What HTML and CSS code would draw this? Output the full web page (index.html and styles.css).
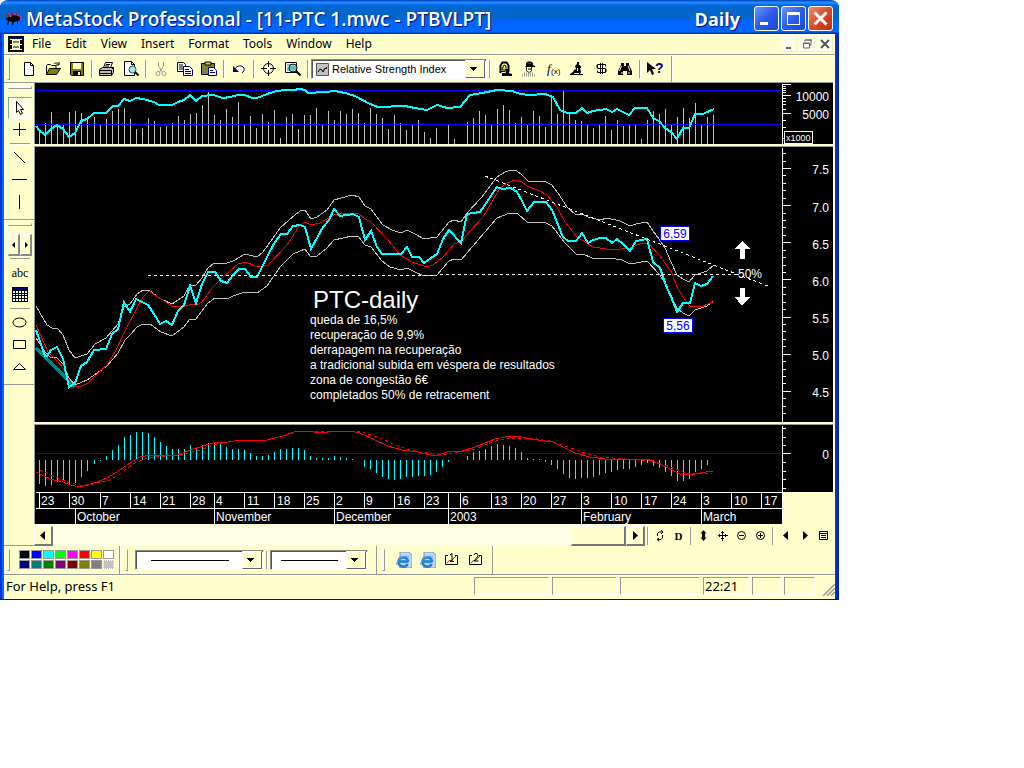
FILE: index.html
```html
<!DOCTYPE html>
<html lang="en">
<head>
    <meta charset="UTF-8">
    <meta name="viewport" content="width=device-width, initial-scale=1.0">
    <title>MetaStock Professional - [11-PTC 1.mwc - PTBVLPT]</title>
    <link rel="stylesheet" href="styles.css">
</head>
<body>
    <div class="window">
        <header class="titlebar">
            <svg class="app-icon" viewBox="0 0 16 16"><text x="0" y="9" class="logo-text">MS</text><path d="M0 8l2-2h3l2-2 4 1 3 1v3l-2 1v3h-1v-3l-3 1-1 3H6v-3L3 10l-1 4H1l1-4z" fill="#000"/></svg>
            <h1>MetaStock Professional - [11-PTC 1.mwc - PTBVLPT]</h1>
            <span class="period">Daily</span>
            <button class="win-btn" aria-label="Minimize"><svg viewBox="0 0 21 21"><path d="M4 14h8v3H4z" fill="#fff"/></svg></button>
            <button class="win-btn" aria-label="Maximize"><svg viewBox="0 0 21 21"><path d="M4 4h13v13H4zM5 7v9h11V7z" fill="#fff" fill-rule="evenodd"/></svg></button>
            <button class="win-btn close" aria-label="Close"><svg viewBox="0 0 21 21"><path d="M4.500 4.500l12 12M16.500 4.500l-12 12" stroke="#fff" stroke-width="3"/></svg></button>
        </header>

        <nav class="menubar">
            <svg class="doc-icon" viewBox="0 0 16 16"><path d="M0 0h16v16H0z" fill="#000"/><path d="M1 1h14v2H1z" fill="#000080"/><path d="M2 3.500h12M2 8.500h12M2 13.500h12M4.500 3v11M11.500 3v11" stroke="#ffc" fill="none"/><path d="M5 4h6v4H5zM5 9h6v4H5z" fill="#ffc"/><path d="M5 6h6M5 11h6" stroke="#000"/></svg>
            <button>File</button>
            <button>Edit</button>
            <button>View</button>
            <button>Insert</button>
            <button>Format</button>
            <button>Tools</button>
            <button>Window</button>
            <button>Help</button>
            <div class="mdi">
                <button aria-label="Minimize chart"><svg viewBox="0 0 12 12"><path d="M3 9h5v2H3z" fill="#666"/></svg></button>
                <button aria-label="Restore chart"><svg viewBox="0 0 12 12"><path d="M4 3.500V2h6v5H8M2.500 5h6v5h-6z" fill="none" stroke="#666"/><path d="M4 2h7M2 5.500h7" stroke="#666"/></svg></button>
                <button aria-label="Close chart"><svg viewBox="0 0 12 12"><path d="M2 2l8 8M10 2l-8 8" stroke="#555" stroke-width="2"/></svg></button>
            </div>
        </nav>

        <div class="toolbar">
            <span class="grip"></span>
            <button aria-label="New"><svg viewBox="0 0 16 16"><path d="M3.500 1.500h6l3 3v10h-9zM9.500 1.500v3h3" fill="#fff" stroke="#000"/></svg></button>
            <button aria-label="Open"><svg viewBox="0 0 16 16"><path d="M1.500 13V4.500l1-1h3l1 1h4.500v3" fill="#ffff80" stroke="#000"/><path d="M1.500 13.500l3-6h11l-4 6z" fill="#808000" stroke="#000"/><path d="M9 3c2-2 4-1 5 1M14 1v3h-3" fill="none" stroke="#000"/></svg></button>
            <button aria-label="Save"><svg viewBox="0 0 16 16"><path d="M1.500 1.500h13v13h-12l-1-1z" fill="#808000" stroke="#000"/><path d="M4 2h8v6H4z" fill="#ffc"/><path d="M4 10h8v4H4z" fill="#000"/><path d="M9 11h2v3H9z" fill="#ffc"/></svg></button>
            <span class="sep"></span>
            <button aria-label="Print"><svg viewBox="0 0 16 16"><path d="M4.500 6.500l2-5h7l-2 5z" fill="#fff" stroke="#000"/><path d="M7 3.500h4M6 5h4" stroke="#000"/><path d="M.5 8.500l3-2h11v5l-2 3h-12z" fill="#bbb" stroke="#000"/><path d="M1 9.500h11.500M1 12.500h11M12.500 9.500V14M13 8l2-2" fill="none" stroke="#000"/><path d="M7 11h3" stroke="#cc0"/></svg></button>
            <button aria-label="Print preview"><svg viewBox="0 0 16 16"><path d="M1.500.5h7l3 3v11h-10zM8.500.5v3h3" fill="#fff" stroke="#000"/><circle cx="9.500" cy="8.500" r="3.500" fill="#9ee" stroke="#444"/><path d="M12 11l3.500 3.500" stroke="#000" stroke-width="2"/></svg></button>
            <span class="sep"></span>
            <button aria-label="Cut"><svg viewBox="0 0 16 16"><path d="M5.500 1v4l4 6M10.500 1v4l-4 6" fill="none" stroke="#999"/><circle cx="5" cy="12.500" r="2" fill="none" stroke="#999"/><circle cx="11" cy="12.500" r="2" fill="none" stroke="#999"/></svg></button>
            <button aria-label="Copy"><svg viewBox="0 0 16 16"><path d="M.5 1.500h6l2 2v7h-8z" fill="#fff" stroke="#000"/><path d="M2 4h4M2 6h4M2 8h4" stroke="#000"/><path d="M6.500 5.500h6l3 3v6h-9z" fill="#fff" stroke="#000080"/><path d="M8 8.500h4M8 10.500h6M8 12.500h6" stroke="#000080"/></svg></button>
            <button aria-label="Paste"><svg viewBox="0 0 16 16"><path d="M.5 2.500h13v11H.5z" fill="#808040" stroke="#000"/><path d="M4 1h6v3H4z" fill="#cc8" stroke="#000"/><path d="M7.500 6.500h5l3 3v5h-8z" fill="#fff" stroke="#000080"/><path d="M9 9.500h3M9 11.500h5" stroke="#000080"/></svg></button>
            <span class="sep"></span>
            <button aria-label="Undo"><svg viewBox="0 0 16 16"><path d="M4 8c2-4 7-4 9-1 1 2-1 4-2 5" fill="none" stroke="#000080"/><path d="M2 5v6h6z" fill="#000080"/></svg></button>
            <span class="sep"></span>
            <button aria-label="Crosshair"><svg viewBox="0 0 16 16"><circle cx="7.500" cy="7.500" r="5" fill="none" stroke="#000"/><path d="M7.500 0v6M7.500 9v6M0 7.500h6M9 7.500h6" stroke="#000"/></svg></button>
            <button aria-label="Explore"><svg viewBox="0 0 16 16"><path d="M.5 1.500h11v10H.5z" fill="#fff" stroke="#000"/><path d="M2 4h5M2 7h2M2 9h3" stroke="#008080"/><circle cx="8" cy="7" r="4" fill="#bff" stroke="#000"/><path d="M6 5v4M8 4v6M10 5v4" stroke="#008080"/><path d="M11 10l4.500 4.500" stroke="#000" stroke-width="2"/></svg></button>
            <span class="sep"></span>
            <div class="combo indicator">
                <svg viewBox="0 0 13 13"><path d="M.5.5h12v12H.5z" fill="#c0c0c0" stroke="#555"/><path d="M2 9l2-3 2 1 1 2 2-4 1 1 1-2" fill="none" stroke="#000"/></svg>
                <select aria-label="Indicator"><option>Relative Strength Index</option></select>
            </div>
            <span class="sep"></span>
            <button aria-label="Explorer"><svg viewBox="0 0 16 16"><path d="M3.500 12V4.500l2-3h4l2 3V11" fill="#ffc" stroke="#000" stroke-width="2"/><path d="M8 8h4v4l3 1v2H5v-2h4z" fill="#000"/><path d="M5 8l2-4 2 1v4H5z" fill="#ee3" stroke="#000"/><path d="M4 10.500h4M5 12.500h5" stroke="#000"/></svg></button>
            <button aria-label="Expert advisor"><svg viewBox="0 0 16 16"><path d="M5 5V2l2-1.500h3L12 2v2l2 1v1H4z" fill="#000"/><path d="M6 2h4v1H6z" fill="#22c"/><path d="M5.500 6v4l2.500 1.500 2.500-1.500V6" fill="#ffc" stroke="#333"/><path d="M7 8h3" stroke="#000"/><path d="M1 14.500h14M3 12.500h10" stroke="#999" stroke-width="2" stroke-dasharray="1 1"/></svg></button>
            <button aria-label="Indicator builder"><svg viewBox="0 0 16 16"><text x="2" y="12" class="fx">f</text><text x="6" y="13" class="fx-arg">(x)</text></svg></button>
            <button aria-label="System tester"><svg viewBox="0 0 16 16"><path d="M8 1h2v3l2 1v2h-1l1 4-1 2h3v1H1v-1l3-2 1-2 2-1-1-3 2-2z" fill="#000"/><path d="M5 12.500h5M8.500 7v3" stroke="#ffc"/></svg></button>
            <button aria-label="Options"><svg viewBox="0 0 16 16"><path d="M12.500 5.500v-2h-8v4h8v4h-8v-2M7.500 2v11M9.500 2v11" fill="none" stroke="#000"/><path d="M4 4v3M13 8v3" stroke="#000"/></svg></button>
            <button aria-label="Find"><svg viewBox="0 0 16 16"><path d="M4 2h3v3h2V2h3v2l3 6v4h-5v-4H6v4H1v-4l3-6z" fill="#000"/><path d="M4.500 5l-2 5M5 11v2M11 5l2 5M12 11v2" stroke="#ffc"/></svg></button>
            <span class="sep"></span>
            <button aria-label="Context help"><svg class="wide" viewBox="0 0 18 16"><path d="M1 1v11l3-3 2 5 2-1-2-5h4z" fill="#000"/><text x="9" y="12" class="help-mark">?</text></svg></button>
            <span class="edge"></span>
        </div>

        <div class="workspace">
            <aside class="tools">
                <div class="tool-group">
                    <span class="hgrip"></span>
                    <button class="pressed" aria-label="Pointer"><svg viewBox="0 0 16 16"><path d="M4.500 1.500v11l2-2 2 4 2-1-2-4h3z" fill="#fff" stroke="#000"/></svg></button>
                    <button aria-label="Crosshair pointer"><svg viewBox="0 0 16 16"><path d="M7.500 1v13M1 7.500h13" stroke="#000"/></svg></button>
                    <span class="hsep"></span>
                    <button aria-label="Trendline"><svg viewBox="0 0 16 16"><path d="M2 2l11 11" stroke="#000"/></svg></button>
                    <button aria-label="Horizontal line"><svg viewBox="0 0 16 16"><path d="M0 7.500h15" stroke="#000"/></svg></button>
                    <button aria-label="Vertical line"><svg viewBox="0 0 16 16"><path d="M7.500 1v14" stroke="#000"/></svg></button>
                </div>
                <div class="tool-group">
                    <span class="hgrip"></span>
                    <div class="pair">
                        <button aria-label="Previous tool"><svg viewBox="0 0 8 8"><path d="M5 1v6L2 4z" fill="#000"/></svg></button>
                        <button aria-label="Next tool"><svg viewBox="0 0 8 8"><path d="M3 1v6l3-3z" fill="#000"/></svg></button>
                    </div>
                    <span class="hsep"></span>
                    <button class="abc">abc</button>
                    <button aria-label="Data grid"><svg viewBox="0 0 16 16"><path d="M0 0h16v15H0z" fill="#000"/><path d="M1 1h14v2H1z" fill="#000080"/><path d="M1 4h2v2H1zM4 4h2v2H4zM7 4h2v2H7zM10 4h2v2h-2zM13 4h2v2h-2zM1 7h2v1H1zM4 7h2v1H4zM7 7h2v1H7zM10 7h2v1h-2zM13 7h2v1h-2zM1 9h2v2H1zM4 9h2v2H4zM7 9h2v2H7zM10 9h2v2h-2zM13 9h2v2h-2zM1 12h2v2H1zM4 12h2v2H4zM7 12h2v2H7zM10 12h2v2h-2zM13 12h2v2h-2z" fill="#fff"/></svg></button>
                    <span class="hsep"></span>
                    <button aria-label="Ellipse"><svg viewBox="0 0 16 16"><ellipse cx="7.500" cy="7.500" rx="6.500" ry="4.500" fill="none" stroke="#000"/></svg></button>
                    <button aria-label="Rectangle"><svg viewBox="0 0 16 16"><path d="M1.500 3.500h12v8h-12z" fill="none" stroke="#000"/></svg></button>
                    <button aria-label="Triangle"><svg viewBox="0 0 16 16"><path d="M7.500 4.500l-6 6h12z" fill="none" stroke="#000"/></svg></button>
                </div>
            </aside>

            <main class="charts">
                <!-- RSI over volume -->
                <svg class="pane" viewBox="35 83 798 61">
                    <path class="bars" id="volumeBars"/>
                    <path class="level" d="M36 90.500H782M36 124.500H782"/>
                    <polyline class="price" points="36,126 39,130 45,135 51,129 57,125 63,129 69,137 75,133 81,121 87,119 94,113 106,113 113,106 118,106 124,99 130,101 136,98 143,99 154,102 159,105 172,105 178,102 184,100 190,95 196,101 202,96 213,95 223,98 230,97 238,95 245,95 252,98 257,98 267,94 277,91 285,90 293,90 300,89 305,90 308,93 325,92 335,91 345,93 355,96 370,104 378,107 405,106 415,108 427,110 437,105 447,108 460,107 470,95 482,93 497,90 512,91 520,94 530,95 545,94 553,97 560,110 567,113 576,113 582,108 587,113 593,111 606,109 612,112 617,109 629,115 635,108 647,108 653,118 659,121 665,128 671,132 677,139 683,128 689,128 695,114 703,114 714,109"/>
                    <path class="axis" d="M782.500 84V144M782 84.500h9M782 86.500h4M782 88.500h4M782 90.500h4M782 92.500h4M782 95.500h9M782 98.500h4M782 101.500h4M782 104.500h4M782 109.500h4M782 113.500h9M782 120.500h4M782 127.500h4M782 138.500h4"/>
                    <text class="scale" x="829" y="101">10000</text>
                    <text class="scale" x="829" y="119">5000</text>
                    <rect class="unit-box" x="784.500" y="131.500" width="28" height="12"/>
                    <text class="unit" x="786" y="141">x1000</text>
                </svg>

                <!-- price with moving average and bands -->
                <svg class="pane" viewBox="35 147 798 275">
                    <path class="trend" d="M36 348L75 387"/>
                    <polyline class="band" points="36,306 47,325 52,328 58,329 63,335 69,350 75,358 87,354 95,344 106,338 118,324 124,307 130,304 137,294 143,290 149,290 161,299 172,304 184,296 190,285 196,285 202,278 208,268 214,263 227,263 233,261 245,254 257,257 263,252 273,238 280,228 289,220 300,211 305,210 311,219 317,217 327,210 334,200 352,195 359,197 365,206 371,209 383,225 392,230 401,233 407,230 415,234 424,239 437,237 449,222 454,220 461,222 467,213 482,197 497,177 505,172 511,170 517,171 522,175 528,181 546,182 552,185 558,193 567,207 576,215 582,214 588,217 600,220 607,218 620,221 630,226 636,224 647,222 653,231 659,239 665,248 671,262 677,275 683,279 689,282 695,275 707,271 714,265"/>
                    <polyline class="band" points="36,338 45,352 50,357 57,358 63,364 69,378 75,385 87,380 100,371 107,366 118,353 125,340 130,335 137,327 143,324 150,324 161,332 172,336 184,327 190,319 196,319 208,303 215,298 227,299 233,296 245,292 257,293 267,286 280,267 293,254 300,251 305,249 311,257 317,256 327,248 334,240 352,236 359,237 365,245 371,247 382,261 390,267 401,270 407,268 415,272 424,276 437,275 449,261 454,259 461,260 467,253 478,240 497,218 510,213 518,214 527,222 546,223 552,226 565,243 576,254 583,254 592,258 610,258 622,260 630,264 636,263 647,261 660,275 667,287 677,308 683,313 689,316 695,310 707,306 713,301"/>
                    <polyline class="average" points="36,325 48,352 57,361 63,368 69,380 75,386 82,386 88,383 100,371 107,365 115,352 125,331 137,308 143,297 149,291 158,297 172,306 182,307 192,304 197,305 202,302 213,287 222,278 238,264 246,262 257,267 268,265 287,245 300,225 305,222 311,225 320,223 334,215 343,213 359,214 365,219 371,222 388,240 400,255 412,262 427,267 433,265 443,257 454,244 462,241 470,231 483,217 493,200 500,188 507,183 515,180 522,182 527,186 538,190 547,195 557,207 565,222 577,237 587,243 593,247 600,248 612,250 630,248 642,243 648,243 660,256 672,273 677,287 683,297 690,306 703,306 713,302"/>
                    <polyline class="price" points="36,330 45,356 47,356 51,350 57,347 63,359 69,387 75,383 81,366 87,362 94,350 106,349 112,334 118,329 124,302 130,312 136,299 148,305 154,314 160,324 166,321 172,325 178,311 184,305 190,286 196,303 202,284 208,272 215,272 221,281 227,283 233,275 239,269 245,269 251,277 257,277 263,265 269,253 275,242 281,234 287,234 293,226 300,225 305,227 311,249 323,227 329,220 334,209 340,216 353,214 359,217 365,240 371,231 377,247 382,254 401,254 407,247 412,257 419,257 424,263 431,258 437,254 443,239 449,230 461,243 467,214 473,213 480,212 497,187 502,189 511,188 517,192 522,201 527,211 534,202 546,202 552,210 563,237 568,241 576,241 582,233 588,243 593,240 600,238 606,238 612,243 617,239 623,244 630,251 636,241 647,239 653,262 660,268 665,283 671,297 677,312 683,303 690,303 695,283 701,286 707,284 713,276"/>
                    <path class="guide" d="M148 275.500H437M440 274.500H738M485 176L770 287"/>
                    <path class="axis" id="priceAxis"/>
                    <text class="scale" x="829" y="174">7.5</text>
                    <text class="scale" x="829" y="212">7.0</text>
                    <text class="scale" x="829" y="249">6.5</text>
                    <text class="scale" x="829" y="286">6.0</text>
                    <text class="scale" x="829" y="323">5.5</text>
                    <text class="scale" x="829" y="360">5.0</text>
                    <text class="scale" x="829" y="397">4.5</text>
                    <rect class="callout-box" x="660.500" y="226.500" width="29" height="14"/>
                    <text class="callout" x="675" y="238">6,59</text>
                    <rect class="callout-box" x="663.500" y="318.500" width="29" height="14"/>
                    <text class="callout" x="678" y="330">5,56</text>
                    <path class="arrow" d="M742 241l8 8h-5v10h-5v-10h-5zM740 288h5v9h5l-8 9-7-9h5z"/>
                    <text class="note" x="738" y="278">50%</text>
                    <text class="heading" x="313" y="308">PTC-daily</text>
                    <text class="note" x="310" y="324">queda de 16,5%</text>
                    <text class="note" x="310" y="339">recuperação de 9,9%</text>
                    <text class="note" x="310" y="354">derrapagem na recuperação</text>
                    <text class="note" x="310" y="369">a tradicional subida em véspera de resultados</text>
                    <text class="note" x="310" y="384">zona de congestão 6€</text>
                    <text class="note" x="310" y="399">completados 50% de retracement</text>
                </svg>

                <!-- MACD -->
                <svg class="pane" viewBox="35 425 798 67">
                    <path class="level" d="M36 453.500H782"/>
                    <path class="histogram" id="macdBars"/>
                    <polyline class="average" points="36,472 40,474 50,479 63,482 70,485 75,486 83,486 97,482 107,478 120,470 130,463 140,457 150,455 178,455 190,450 203,446 213,443 228,442 240,440 267,440 283,436 297,431 310,431 318,433 328,432 335,431 350,431 360,433 375,440 388,446 402,450 418,452 435,456 450,451 462,451 475,447 495,439 510,436 518,436 530,439 553,442 575,453 590,457 605,459 650,460 660,464 670,469 680,474 690,475 700,473 713,471"/>
                    <polyline class="average dashed" points="40,470 60,479 70,483 85,486 97,483 110,480 120,474 133,464 147,458 165,456 180,455 200,450 217,444 240,440 265,440 280,437 300,431 345,431 362,432 380,438 395,445 410,450 420,452 440,455 460,452 475,449 492,442 508,438 530,438 550,441 565,446 585,453 600,457 650,461 665,465 680,471 690,474 712,473"/>
                    <path class="axis" d="M782.500 426V492M782 428.500h4M782 437.500h4M782 445.500h4M782 453.500h9M782 462.500h4M782 471.500h4M782 479.500h4M782 488.500h4"/>
                    <text class="scale" x="829" y="459">0</text>
                </svg>

                <svg class="dates" viewBox="35 492 798 32">
                    <rect x="35" y="492" width="748" height="32"/>
                    <path class="axis" d="M36 492.500H783M36 508.500H783M782.500 492V524M39.500 492v16M69.500 492v16M100.500 492v16M130.500 492v16M160.500 492v16M190.500 492v16M214.500 492v32M244.500 492v16M274.500 492v16M304.500 492v16M334.500 492v32M364.500 492v16M394.500 492v16M424.500 492v16M460.500 492v16M491.500 492v16M521.500 492v16M551.500 492v16M581.500 492v32M611.500 492v16M641.500 492v16M671.500 492v16M701.500 492v32M731.500 492v16M761.500 492v16M75.500 508v16M448.500 492v32"/>
                    <g class="note">
                        <text x="41" y="505">23</text>
                        <text x="71" y="505">30</text>
                        <text x="102" y="505">7</text>
                        <text x="133" y="505">14</text>
                        <text x="162" y="505">21</text>
                        <text x="192" y="505">28</text>
                        <text x="216" y="505">4</text>
                        <text x="247" y="505">11</text>
                        <text x="277" y="505">18</text>
                        <text x="306" y="505">25</text>
                        <text x="336" y="505">2</text>
                        <text x="366" y="505">9</text>
                        <text x="397" y="505">16</text>
                        <text x="426" y="505">23</text>
                        <text x="462" y="505">6</text>
                        <text x="494" y="505">13</text>
                        <text x="523" y="505">20</text>
                        <text x="553" y="505">27</text>
                        <text x="583" y="505">3</text>
                        <text x="614" y="505">10</text>
                        <text x="644" y="505">17</text>
                        <text x="673" y="505">24</text>
                        <text x="703" y="505">3</text>
                        <text x="734" y="505">10</text>
                        <text x="764" y="505">17</text>
                        <text x="77" y="521">October</text>
                        <text x="216" y="521">November</text>
                        <text x="336" y="521">December</text>
                        <text x="450" y="521">2003</text>
                        <text x="583" y="521">February</text>
                        <text x="703" y="521">March</text>
                    </g>
                </svg>

                <div class="scroll-row">
                    <button class="raised" aria-label="Scroll left"><svg viewBox="0 0 12 12"><path d="M8 1v9L3 5.500z" fill="#000"/></svg></button>
                    <div class="track"><span class="thumb raised"></span></div>
                    <button class="raised" aria-label="Scroll right"><svg viewBox="0 0 12 12"><path d="M4 1v9l5-4.500z" fill="#000"/></svg></button>
                    <span class="sep tight"></span>
                    <button aria-label="Refresh"><svg viewBox="0 0 12 12"><path d="M3.500 6V3.500L5 2h3M8.500 5v3L7 9.500H4M7 0l2 2-2 2M5 8L3 9.500 5 11" fill="none" stroke="#000"/></svg></button>
                    <button class="letter">D</button>
                    <span class="sep"></span>
                    <button aria-label="Fit vertically"><svg viewBox="0 0 12 12"><path d="M5.500 0l3 3.500H7v4h1.500l-3 3.500-3-3.500H4v-4H2.500z" fill="#000"/></svg></button>
                    <button aria-label="Fit all"><svg viewBox="0 0 12 12"><path d="M5.500 1v10M1 5.500h10M4 2.500h3M4 8.500h3M2.500 4v3M8.500 4v3" stroke="#000"/></svg></button>
                    <button aria-label="Zoom out"><svg viewBox="0 0 12 12"><circle cx="5.500" cy="5.500" r="4" fill="none" stroke="#000"/><path d="M3 5.500h5" stroke="#000"/></svg></button>
                    <button aria-label="Zoom in"><svg viewBox="0 0 12 12"><circle cx="5.500" cy="5.500" r="4" fill="none" stroke="#000"/><path d="M3 5.500h5M5.500 3v5" stroke="#000"/></svg></button>
                    <span class="sep"></span>
                    <button aria-label="Previous security"><svg viewBox="0 0 12 12"><path d="M8 1v9L3 5.500z" fill="#000"/></svg></button>
                    <button aria-label="Next security"><svg viewBox="0 0 12 12"><path d="M4 1v9l5-4.500z" fill="#000"/></svg></button>
                    <button aria-label="Chart list"><svg viewBox="0 0 12 12"><path d="M1.500 1.500h8v8h-8zM1 3.500h9M3 5.500h5M3 7.500h5" fill="none" stroke="#000"/></svg></button>
                </div>
            </main>
        </div>

        <div class="toolbar lower">
            <span class="grip"></span>
            <div class="palette">
                <button class="black" aria-label="Black"></button>
                <button class="blue" aria-label="Blue"></button>
                <button class="cyan" aria-label="Cyan"></button>
                <button class="lime" aria-label="Lime"></button>
                <button class="magenta" aria-label="Magenta"></button>
                <button class="red" aria-label="Red"></button>
                <button class="yellow" aria-label="Yellow"></button>
                <button class="white" aria-label="White"></button>
                <button class="navy" aria-label="Navy"></button>
                <button class="teal" aria-label="Teal"></button>
                <button class="green" aria-label="Green"></button>
                <button class="purple" aria-label="Purple"></button>
                <button class="maroon" aria-label="Maroon"></button>
                <button class="olive" aria-label="Olive"></button>
                <button class="gray" aria-label="Gray"></button>
                <button class="silver" aria-label="Silver"></button>
            </div>
            <span class="edge"></span>
            <span class="grip"></span>
            <div class="combo line-style"><select aria-label="Line style"><option aria-label="Solid"></option></select></div>
            <span class="sep"></span>
            <div class="combo line-weight"><select aria-label="Line weight"><option aria-label="Thin"></option></select></div>
            <span class="edge"></span>
            <span class="grip"></span>
            <button aria-label="Web page 1"><svg viewBox="0 0 16 16"><path d="M4 0h9l3 3v13H4z" fill="#c3d3f7" stroke="#7b94cf"/><path d="M12.500 9.500H3.500M11.500 12c-1 2-3 3-5 2.500C3.500 14 2 12 2.500 9.500 3 7 5 5.500 7.500 5.500c3 0 4.500 2 4.500 4" fill="none" stroke="#1c7fd6" stroke-width="2.500"/><path d="M0 13C2 7 8 3 13 5" fill="none" stroke="#4aa8f0"/></svg></button>
            <button aria-label="Web page 2"><svg viewBox="0 0 16 16"><path d="M4 0h9l3 3v13H4z" fill="#c3d3f7" stroke="#7b94cf"/><path d="M12.500 9.500H3.500M11.500 12c-1 2-3 3-5 2.500C3.500 14 2 12 2.500 9.500 3 7 5 5.500 7.500 5.500c3 0 4.500 2 4.500 4" fill="none" stroke="#1c7fd6" stroke-width="2.500"/><path d="M0 13C2 7 8 3 13 5" fill="none" stroke="#4aa8f0"/></svg></button>
            <button aria-label="Layout 1"><svg viewBox="0 0 16 16"><path d="M4 3.500H1.500v9h12v-9H11" fill="none" stroke="#000"/><path d="M3 11l3-3 1 1 5-5" fill="none" stroke="#e00"/><path d="M6 3l2-1.500V9M6 9.500h4" fill="none" stroke="#000"/></svg></button>
            <button aria-label="Layout 2"><svg viewBox="0 0 16 16"><path d="M4 3.500H1.500v9h12v-9H11" fill="none" stroke="#000"/><path d="M3 11l3-3 1 1 5-5" fill="none" stroke="#e00"/><path d="M6 3l1-1.500h2L10 3v1L6 9h4.500" fill="none" stroke="#000"/></svg></button>
            <span class="edge"></span>
        </div>

        <footer class="status">
            <span class="hint">For Help, press F1</span>
            <span class="cell w75"></span>
            <span class="cell w65"></span>
            <span class="cell w80"></span>
            <span class="cell w46">22:21</span>
            <span class="cell w29"></span>
            <span class="cell w31"></span>
            <svg class="resize" viewBox="0 0 13 13"><path d="M1 13L13 1M5 13l8-8M9 13l4-4" stroke="#999" stroke-width="1.500"/></svg>
        </footer>
    </div>

    <script>
        // One value per trading day, in chart units
        const volume = [
            14, 21, 32, 19, 19, 32, 33, 31, 24, 27, 19, 25, 33, 35, 36, 25, 15, 16, 26, 23,
            17, 18, 21, 28, 24, 30, 31, 39, 52, 29, 24, 35, 27, 42, 19, 28, 16, 30, 22, 34,
            6, 27, 30, 15, 29, 29, 36, 20, 33, 24, 33, 30, 35, 31, 21, 36, 30, 26, 15, 29,
            21, 14, 20, 24, 12, 6, 16, 0, 19, 5, 0, 22, 26, 33, 29, 20, 35, 39, 34, 21,
            27, 20, 33, 28, 17, 48, 30, 53, 30, 24, 23, 20, 16, 19, 28, 14, 24, 18, 19, 19,
            5, 24, 33, 30, 35, 19, 27, 36, 26, 41, 19, 27, 29
        ];
        const macd = [
            -24, -26, -25, -22, -21, -24, -23, -17, -11, -4, -1, 4, 10, 15, 23, 25, 28, 28, 27, 23,
            18, 14, 11, 11, 11, 15, 13, 15, 17, 18, 16, 13, 11, 11, 10, 7, 4, 4, 5, 8,
            11, 11, 12, 12, 10, 4, 2, 2, 2, 4, 3, 2, 1, 0, -7, -9, -13, -17, -19, -20,
            -19, -17, -17, -16, -16, -15, -12, -7, -2, 0, 0, 4, 8, 9, 11, 14, 16, 15, 14, 12,
            8, 2, 1, 1, -2, -5, -9, -14, -18, -19, -18, -18, -17, -15, -13, -12, -10, -9, -9, -7,
            -5, -3, -6, -8, -12, -16, -21, -21, -19, -12, -9, -5
        ];

        function dayX(i) {
            if (i < 9) return 39.5 + 6 * i;
            return (i < 71 ? 40.5 : 41.5) + 6 * i;
        }

        function barPath(values, base) {
            return values.map((v, i) => `M${dayX(i)} ${base}v${-v}`).join('');
        }

        document.getElementById('volumeBars').setAttribute('d', barPath(volume, 144));
        document.getElementById('macdBars').setAttribute('d', barPath(macd, 460));

        // Price scale: a long tick every 0.5, short ones every 0.1
        let ticks = 'M782.5 148V422';
        for (let i = -2; i < 34; i++) {
            const y = Math.round(168 + i * 7.43) + 0.5;
            ticks += `M782 ${y}h${i % 5 === 0 ? 9 : 4}`;
        }
        document.getElementById('priceAxis').setAttribute('d', ticks);
    </script>
</body>
</html>
```
FILE: styles.css
```css
* {
    margin: 0;
    padding: 0;
    box-sizing: border-box;
}

body {
    font-family: "Noto Sans", Tahoma, sans-serif;
    font-size: 12px;
    color: #000;
    background: #fff;
}

button {
    display: flex;
    align-items: center;
    justify-content: center;
    border: none;
    background: none;
    font: inherit;
    color: inherit;
}

svg {
    display: block;
    flex: none;
}

.window {
    width: 100%;
    max-width: 839px;
    padding: 0 4px 3px;
    border-radius: 8px 8px 0 0;
    background: linear-gradient(90deg, #0831d9 2px, #0066ff 2px, #0066ff 4px, #ffffcc 4px, #ffffcc calc(100% - 4px), #0040e0 calc(100% - 4px), #001ea0);
    border-bottom: 1px solid #001090;
}

/* title bar */
.titlebar {
    display: flex;
    align-items: center;
    gap: 2px;
    height: 34px;
    margin: 0 -4px;
    padding: 3px 6px 0 6px;
    border-radius: 8px 8px 0 0;
    background: linear-gradient(#0050d0 1px, #3090ff 2px, #0070f0 5px, #0066cc 6px, #0066cc 19px, #0066ff 20px, #0066ff 32px, #0030c0 33px);
    color: #fff;
}

.app-icon {
    width: 16px;
    height: 16px;
}

.logo-text {
    font: bold 10px "Liberation Serif", serif;
    fill: #f00;
}

.titlebar h1,
.period {
    font-family: "Open Sans", "Trebuchet MS", sans-serif;
    font-size: 19px;
    font-weight: 600;
    text-shadow: 1px 1px 1px #00107a;
    white-space: nowrap;
}

.titlebar h1 {
    flex: 1;
    padding-left: 2px;
}

.period {
    margin-right: 12px;
    font-size: 18px;
    font-weight: 700;
}

.win-btn {
    width: 25px;
    height: 25px;
    border: 1px solid #fff;
    border-radius: 3px;
    background: linear-gradient(135deg, #6a96ff, #2b5bea 50%, #1c48d0);
}

.win-btn svg {
    width: 21px;
    height: 21px;
}

.close {
    background: linear-gradient(135deg, #f09070, #d8492a 50%, #b83010);
}

/* menu */
.menubar {
    display: flex;
    align-items: center;
    height: 21px;
    padding: 0 2px 1px 4px;
    border-bottom: 1px solid #999;
}

.menubar button {
    padding: 0 7px;
}

.doc-icon {
    width: 16px;
    height: 16px;
    margin-right: 1px;
}

.mdi {
    display: flex;
    gap: 2px;
    margin-left: auto;
}

.menubar .mdi button {
    width: 16px;
    height: 17px;
    padding: 0;
    background: #fffff0;
    border: 1px solid #fff;
    border-right-color: #eec;
    border-bottom-color: #eec;
}

.mdi svg {
    width: 12px;
    height: 12px;
}

/* toolbars */
.toolbar {
    display: flex;
    align-items: center;
    height: 27px;
    padding-left: 3px;
    border-top: 1px solid #fff;
}

.toolbar button {
    width: 24px;
    height: 22px;
}

.toolbar button svg {
    width: 16px;
    height: 16px;
}

.toolbar button .wide {
    width: 18px;
}

.grip {
    width: 3px;
    height: 22px;
    margin-right: 7px;
    border: 1px solid #fff;
    border-right-color: #999;
    border-bottom-color: #999;
}

.sep {
    flex: none;
    width: 2px;
    height: 18px;
    margin: 0 2px;
    border-left: 1px solid #999;
    border-right: 1px solid #fff;
}

.edge {
    width: 2px;
    align-self: stretch;
    margin: 0 4px;
    border-left: 1px solid #999;
    border-right: 1px solid #fff;
}

.combo {
    display: flex;
    align-items: center;
    height: 20px;
    padding: 1px;
    background: #fff;
    border: 1px solid #888;
    border-right-color: #fff;
    border-bottom-color: #fff;
    box-shadow: inset 1px 1px 0 #555;
}

.combo select {
    flex: 1;
    align-self: stretch;
    min-width: 0;
    padding-left: 3px;
    appearance: none;
    border: none;
    border-radius: 0;
    font: 11px "Liberation Sans", Arial, sans-serif;
    color: #000;
    background: transparent;
}

.combo::after {
    content: "";
    width: 18px;
    height: 16px;
    background: linear-gradient(#000, #000) 7px 9px / 1px 1px no-repeat,
        linear-gradient(#000, #000) 6px 8px / 3px 1px no-repeat,
        linear-gradient(#000, #000) 5px 7px / 5px 1px no-repeat,
        linear-gradient(#000, #000) 4px 6px / 7px 1px no-repeat,
        #ffffcc;
    border: 1px solid #fff;
    border-right-color: #666;
    border-bottom-color: #666;
}

.indicator {
    width: 176px;
    padding-left: 4px;
}

.indicator > svg {
    width: 13px;
    height: 13px;
}

.fx {
    font: italic 13px "Liberation Serif", serif;
}

.fx-arg {
    font: 8px "Liberation Sans", sans-serif;
}

.help-mark {
    font: bold 14px "Liberation Sans", sans-serif;
    fill: #000080;
}

/* drawing tools */
.workspace {
    display: flex;
}

.tools {
    flex: none;
    width: 30px;
    border-top: 1px solid #999;
    border-bottom: 1px solid #999;
}

.tool-group {
    display: flex;
    flex-direction: column;
    align-items: center;
    padding: 0 0 6px 2px;
    border-bottom: 1px solid #999;
}

.tools button {
    width: 24px;
    height: 22px;
}

.tools button svg {
    width: 16px;
    height: 16px;
}

.hgrip {
    width: 24px;
    height: 3px;
    margin: 3px 0 8px;
    border: 1px solid #fff;
    border-right-color: #999;
    border-bottom-color: #999;
}

.hsep {
    width: 20px;
    height: 2px;
    margin: 2px 0;
    border-top: 1px solid #999;
    border-bottom: 1px solid #fff;
}

.tools .pressed {
    background: #ffffe6;
    border: 1px solid #999;
    border-right-color: #fff;
    border-bottom-color: #fff;
}

.pair {
    display: flex;
}

.tools .pair button {
    width: 12px;
    border: 1px solid #fff;
    border-right: 2px solid #888;
    border-bottom: 2px solid #888;
}

.tools .pair svg {
    width: 8px;
    height: 8px;
}

.tools .abc {
    font: 12px "Liberation Serif", serif;
}

/* charts */
.charts {
    flex: 1;
    min-width: 0;
    padding-right: 2px;
}

.pane,
.dates {
    width: 100%;
    height: auto;
    border-left: 1px solid #999;
    shape-rendering: crispEdges;
}

.pane {
    margin-bottom: 2px;
    border-top: 1px solid #999;
    background: #000;
}

.charts .pane:nth-of-type(3) {
    margin-bottom: 0;
}

.pane text,
.dates text {
    font-family: "Liberation Sans", Arial, sans-serif;
    font-size: 12px;
    fill: #fff;
}

.pane path,
.pane polyline,
.dates path {
    fill: none;
}

.bars {
    stroke: #c0c0c0;
}

.histogram {
    stroke: #0ff;
}

.level {
    stroke: #00f;
}

.price {
    stroke: #0ff;
    stroke-width: 2;
}

.band {
    stroke: #c0c0c0;
}

.average {
    stroke: #f00;
}

.dashed {
    stroke-dasharray: 3 3;
}

.trend {
    stroke: #008080;
    stroke-width: 3;
}

.guide {
    stroke: #fff;
    stroke-dasharray: 3 3;
}

.axis {
    stroke: #fff;
}

.pane .arrow {
    fill: #fff;
}

.pane .scale {
    text-anchor: end;
}

.pane .unit {
    font-size: 9px;
}

.unit-box {
    fill: #000;
    stroke: #fff;
}

.callout-box {
    fill: #fff;
    stroke: #00f;
}

.pane .callout {
    fill: #00f;
    text-anchor: middle;
}

.pane .heading {
    font-size: 24px;
}

.scroll-row {
    display: flex;
    align-items: center;
    padding-top: 2px;
}

.scroll-row button {
    width: 19px;
    height: 20px;
}

.scroll-row button svg {
    width: 12px;
    height: 12px;
}

.scroll-row .tight {
    margin-right: 1px;
}

.raised {
    border: 1px solid #fff;
    border-right: 2px solid #777;
    border-bottom: 2px solid #777;
    background: #ffffcc;
}

.track {
    display: flex;
    flex: 1;
    justify-content: flex-end;
    height: 20px;
    background: #ffffe8;
}

.thumb {
    width: 55px;
}

.scroll-row .letter {
    font: bold 11px "Liberation Serif", serif;
}

/* colours and line styles */
.lower {
    height: 29px;
    border-top: none;
    border-bottom: 1px solid #999;
}

.palette {
    display: grid;
    grid-template-columns: repeat(8, 12px);
    margin-left: 2px;
}

.palette button {
    width: 11px;
    height: 9px;
    margin-bottom: 1px;
    border: 1px solid #999;
}

.black { background: #000; }
.blue { background: #00f; }
.cyan { background: #0ff; }
.lime { background: #0f0; }
.magenta { background: #f0f; }
.red { background: #f00; }
.yellow { background: #ff0; }
.white { background: #fff; }
.navy { background: #000080; }
.teal { background: #008080; }
.green { background: #008000; }
.purple { background: #800080; }
.maroon { background: #800000; }
.olive { background: #808000; }
.gray { background: #808080; }
.silver { background: #c0c0c0; }

.palette .silver {
    border: 1px dotted #fff;
}

.line-style {
    width: 129px;
}

.line-weight {
    width: 98px;
    margin-right: 4px;
}

.line-style select {
    background: linear-gradient(#000, #000) center / 78px 1px no-repeat;
}

.line-weight select {
    background: linear-gradient(#000, #000) center / 57px 1px no-repeat;
}

/* status bar */
.status {
    display: flex;
    align-items: center;
    gap: 3px;
    height: 21px;
    padding-left: 2px;
    border-top: 1px solid #fff;
    font-size: 13px;
}

.hint {
    flex: 1;
}

.cell {
    height: 18px;
    padding-left: 1px;
    border: 1px solid #999;
    border-right-color: #fff;
    border-bottom-color: #fff;
    line-height: 17px;
}

.w75 { width: 75px; }
.w65 { width: 65px; }
.w80 { width: 80px; }
.w46 { width: 46px; }
.w29 { width: 29px; }
.w31 { width: 31px; }

.resize {
    width: 13px;
    height: 13px;
    margin-left: 4px;
    align-self: flex-end;
}
```
